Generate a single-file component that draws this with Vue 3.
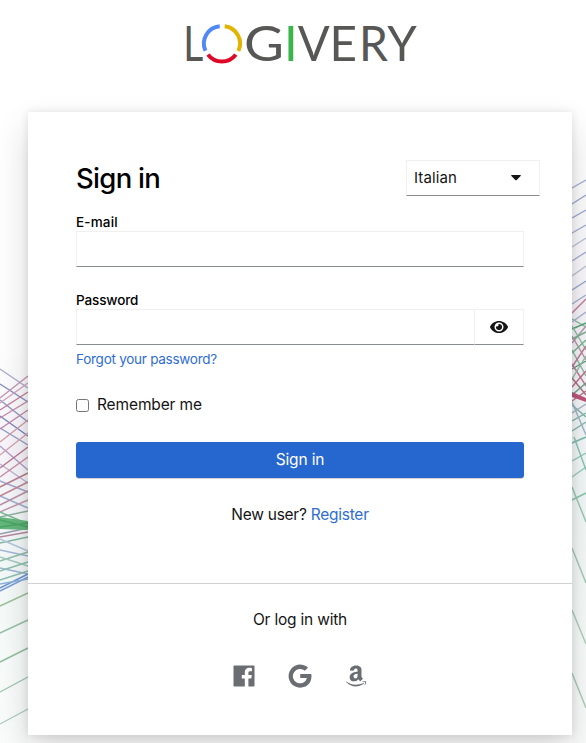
<script setup>
import { reactive, ref } from 'vue'

const form = reactive({
  locale: 'it',
  email: '',
  password: '',
  remember: false,
})

const showPassword = ref(false)

// decorative threads behind the card: x1, y1, x2, y2, color
const threads = [
  [0, 369, 28, 388, '#aaaed0'],
  [0, 384, 28, 402, '#858dc0'],
  [0, 400, 28, 422, '#9098c6'],
  [0, 416, 28, 436, '#7885bb'],
  [0, 428, 28, 445, '#8f9bc9'],
  [0, 446, 28, 470, '#b39bcb'],
  [0, 464, 28, 483, '#c0b0d6'],
  [0, 481, 28, 492, '#a5a6cd'],
  [0, 496, 28, 508, '#9fb0cf'],
  [0, 398, 28, 376, '#c697b5'],
  [0, 403, 28, 383, '#d3a6bc'],
  [0, 410, 28, 392, '#c47f9b'],
  [0, 418, 28, 401, '#c88ba5'],
  [0, 429, 28, 410, '#c08aa8'],
  [0, 442, 28, 420, '#cfa0a8'],
  [0, 455, 28, 433, '#d4a5ae'],
  [0, 468, 28, 447, '#b77790'],
  [0, 477, 28, 457, '#c98d9d'],
  [0, 487, 28, 473, '#b98190'],
  [0, 496, 28, 482, '#c08998'],
  [0, 505, 28, 491, '#bd93a7'],
  [0, 512, 28, 500, '#c39baa'],
  [0, 517, 28, 511, '#92b3a7'],
  [0, 512, 28, 524, '#7fb994'],
  [0, 537, 28, 532, '#b989a0'],
  [0, 534, 28, 528, '#9a9fb0'],
  [0, 543, 28, 537, '#84b9a3'],
  [0, 539, 28, 551, '#b5c6dd'],
  [0, 550, 28, 556, '#a4b8d6'],
  [0, 561, 28, 552, '#8fbfa9'],
  [0, 557, 28, 566, '#a6cac0'],
  [0, 568, 28, 574, '#9fb4d6'],
  [0, 571, 28, 562, '#8cc1ad'],
  [0, 580, 28, 571, '#8dbfb0'],
  [0, 588, 28, 574, '#6e94d4'],
  [0, 591, 28, 577, '#7aa0dc'],
  [0, 584, 28, 579, '#8eb2dc'],
  [0, 606, 28, 593, '#9fc29a'],
  [0, 633, 28, 620, '#98c2a6'],
  [0, 662, 28, 648, '#94bfa2'],
  [0, 692, 28, 677, '#9fc6b0'],
  [0, 724, 28, 709, '#b0cdbb'],
  [572, 188, 586, 180, '#a3aed0'],
  [572, 204, 586, 195, '#9aa8cd'],
  [572, 218, 586, 210, '#9ba9d0'],
  [572, 233, 586, 225, '#a3aed0'],
  [572, 247, 586, 238, '#b8c1d9'],
  [572, 261, 586, 252, '#a3aed0'],
  [572, 276, 586, 266, '#b9c2cf'],
  [572, 290, 586, 281, '#97a4cc'],
  [572, 304, 586, 295, '#a5aece'],
  [572, 313, 586, 299, '#c57e99'],
  [572, 319, 586, 327, '#7ebe9a'],
  [572, 322, 586, 312, '#a7b0cf'],
  [572, 329, 586, 323, '#5aa67c'],
  [572, 326, 586, 350, '#86bfa0'],
  [572, 343, 586, 326, '#b997b1'],
  [572, 339, 586, 332, '#78b590'],
  [572, 336, 586, 360, '#b592a4'],
  [572, 353, 586, 340, '#78b590'],
  [572, 350, 586, 376, '#80bc9a'],
  [572, 367, 586, 346, '#be7c96'],
  [572, 369, 586, 361, '#5d9d7d'],
  [572, 364, 586, 386, '#c08098'],
  [572, 379, 586, 356, '#93b9a3'],
  [572, 378, 586, 395, '#a97386'],
  [572, 387, 586, 371, '#bc6e87'],
  [572, 395, 586, 383, '#69a184'],
  [572, 401, 586, 391, '#b97487'],
  [572, 405, 586, 417, '#7fb4a3'],
  [572, 413, 586, 404, '#a1b2c8'],
  [572, 421, 586, 413, '#7bb7a5'],
  [572, 431, 586, 422, '#7db7a8'],
  [572, 443, 586, 437, '#79bcb2'],
  [572, 461, 586, 453, '#92cabb'],
  [572, 477, 586, 467, '#9accbb'],
  [572, 500, 586, 493, '#8bc9ad'],
  [572, 402, 586, 435, '#9bb7c8'],
  [574, 437, 586, 470, '#8bc4b2'],
  [572, 487, 586, 522, '#98c7b2'],
  [572, 548, 586, 583, '#a4c8b5'],
  [572, 610, 586, 644, '#accdbb'],
  [572, 673, 586, 708, '#a8cbb6'],
]
</script>

<template>
  <div class="page">
    <svg class="backdrop" viewBox="0 0 586 743" aria-hidden="true">
      <defs>
        <linearGradient id="tint" x1="0" y1="0" x2="0" y2="1">
          <stop offset="0" stop-color="#f8f7fc" stop-opacity="0" />
          <stop offset="0.25" stop-color="#f8f5fb" />
          <stop offset="0.55" stop-color="#f4faf9" />
          <stop offset="1" stop-color="#fbfdfc" />
        </linearGradient>
      </defs>
      <rect x="0" y="350" width="28" height="393" fill="url(#tint)" />
      <rect x="572" y="170" width="14" height="573" fill="url(#tint)" />
      <g class="threads">
        <line
          v-for="(t, i) in threads"
          :key="i"
          :x1="t[0]"
          :y1="t[1]"
          :x2="t[2]"
          :y2="t[3]"
          :stroke="t[4]"
        />
        <path d="M0 517L28 521V530L0 529Z" fill="#65b77d" />
        <path d="M0 520L28 527M0 527L28 523" stroke="#48a765" />
        <path d="M572 392L586 398V402L572 397Z" fill="#bd567b" />
      </g>
    </svg>

    <header class="brand">
      <svg class="logo" viewBox="0 -12 240 76" role="img" aria-label="Logivery">
        <g class="letters">
          <text x="3.2" y="44.3" textLength="20" lengthAdjust="spacingAndGlyphs">L</text>
          <text x="64" y="44.3" textLength="40" lengthAdjust="spacingAndGlyphs">G</text>
          <text x="117.7" y="44.3" textLength="32" lengthAdjust="spacingAndGlyphs">V</text>
          <text x="149.5" y="44.3" textLength="27.5" lengthAdjust="spacingAndGlyphs">E</text>
          <text x="179" y="44.3" textLength="29" lengthAdjust="spacingAndGlyphs">R</text>
          <text x="207.3" y="44.3" textLength="29.5" lengthAdjust="spacingAndGlyphs">Y</text>
          <text x="104.1" y="44.3" class="green">I</text>
        </g>
        <g fill="none" stroke-width="4">
          <path d="M25.4 33.7A17.4 17.4 0 0 1 39.7 9.3" stroke="#5089f5" />
          <path d="M44.7 9.3A17.4 17.4 0 0 1 58.4 34" stroke="#e0b400" />
          <path d="M28 37.6A17.4 17.4 0 0 0 55.8 37.6" stroke="#e00727" />
        </g>
      </svg>
    </header>

    <main class="card">
      <div class="card-body">
        <div class="title-row">
          <h1>Sign in</h1>
          <button class="locale" type="button">
            <span>Italian</span>
            <svg width="10" height="6" viewBox="0 0 10 6"><path d="M.7 0H9.3Q10.3.3 9.6 1.1L5.7 4.9Q5 5.5 4.3 4.9L.4 1.1Q-.3.3.7 0Z" fill="#151515" /></svg>
          </button>
        </div>

        <form @submit.prevent>
          <label class="label email-label" for="email">E-mail</label>
          <input id="email" v-model="form.email" class="control" type="text" />

          <label class="label password-label" for="password">Password</label>
          <div class="password">
            <input id="password" v-model="form.password" class="control" :type="showPassword ? 'text' : 'password'" />
            <button class="reveal" type="button" aria-label="Show password" @click="showPassword = !showPassword">
              <svg width="18" height="16" viewBox="0 0 576 512" fill="#151515">
                <path d="M572.52 241.4C518.29 135.59 410.93 64 288 64S57.68 135.64 3.48 241.41a32.35 32.35 0 0 0 0 29.19C57.71 376.41 165.07 448 288 448s230.32-71.64 284.52-177.41a32.35 32.35 0 0 0 0-29.19zM288 400a144 144 0 1 1 144-144 143.93 143.93 0 0 1-144 144zm0-240a95.31 95.31 0 0 0-25.31 3.79 47.85 47.85 0 0 1-66.9 66.9A95.78 95.78 0 1 0 288 160z" />
              </svg>
            </button>
          </div>
          <a class="forgot" href="#">Forgot your password?</a>

          <label class="remember">
            <input v-model="form.remember" type="checkbox" />
            <span>Remember me</span>
          </label>

          <button class="submit" type="submit">Sign in</button>
        </form>

        <p class="register">New user? <a href="#">Register</a></p>
      </div>

      <footer class="social">
        <h2>Or log in with</h2>
        <div class="providers">
          <a href="#" aria-label="Facebook">
            <svg width="24" height="24" viewBox="0 0 24 24"><path d="M2.3 1.5H21.7Q22.5 1.5 22.5 2.3V21.7Q22.5 22.5 21.7 22.5H16.4V14.5H19.3L19.8 10.9H16.4V8.8C16.4 7.7 16.8 7.2 18.1 7.2H19.9V4C19.5 3.9 18.5 3.8 17.3 3.8 14.6 3.8 12.8 5.4 12.8 8.3V10.9H9.8V14.5H12.8V22.5H2.3Q1.5 22.5 1.5 21.7V2.3Q1.5 1.5 2.3 1.5Z" /></svg>
          </a>
          <a href="#" aria-label="Google">
            <svg width="24" height="24" viewBox="0 0 24 24"><path d="M12.2 10H23.3C24.5 17.5 20 23.7 12.2 23.7A11.6 11.6 0 1 1 20.1 3.6L16.9 6.8A7.2 7.2 0 1 0 19 14.1H12.2Z" /></svg>
          </a>
          <a href="#" aria-label="Amazon">
            <svg width="24" height="24" viewBox="0 0 448 512"><path d="M257.2 162.7c-48.7 1.8-169.5 15.5-169.5 117.5 0 109.500 138.300 114 183.500 43.200 6.500 10.200 35.400 37.500 45.300 46.800l56.800-56S341 288.900 341 261.400V114.300C341 89 316.500 32 228.700 32 140.700 32 94 87 94 136.300l73.500 6.800c16.300-49.500 54.200-49.500 54.200-49.500 40.700-.1 35.500 29.800 35.500 69.100zm0 86.800c0 80-84.200 68-84.200 17.200 0-47.200 50.500-56.700 84.200-57.800v40.600zm136 163.500c-7.700 10-70 67-174.500 67S34.200 408.500 9.700 379c-6.800-7.700 1-11.300 5.500-8.300C88.500 415.200 203 488.500 387.700 401c7.500-3.700 13.300 2 5.500 12zm39.800 2.200c-6.500 15.800-16 26.800-21.200 31-5.500 4.500-9.500 2.700-6.500-3.800s19.300-46.500 12.700-55c-6.500-8.300-37-4.300-48-3.200-10.800 1-13 2-14-.3-2.300-5.700 21.700-15.500 37.500-17.500 15.700-1.800 41-.8 46 5.700 3.700 5.100 0 27.100-6.500 43.100z" /></svg>
          </a>
        </div>
      </footer>
    </main>
  </div>
</template>

<style>
body {
  background: #fff;
  overflow: hidden;
}
</style>

<style scoped>
* {
  box-sizing: border-box;
}

.page {
  position: relative;
  height: 743px;
  overflow: hidden;
  color: #151515;
  font-family: Inter, "Liberation Sans", sans-serif;
  font-size: 15.5px;
  line-height: 24px;
  letter-spacing: -0.13px;
}

.backdrop {
  position: absolute;
  inset: 0;
  width: 586px;
  height: 743px;
}

.threads {
  stroke-width: 1.4;
  filter: blur(0.4px);
}

.brand {
  display: flex;
  justify-content: center;
  height: 112px;
  padding: 5px 0 0 14px;
}

.logo {
  width: 240px;
  height: 76px;
}

.letters {
  font-family: Lato, sans-serif;
  font-size: 49px;
  letter-spacing: 0;
  fill: #575756;
}

.letters .green {
  fill: #3bb54a;
}

.card {
  position: relative;
  width: 544px;
  height: 623px;
  margin-left: 28px;
  background: #fff;
  box-shadow: 0 16px 32px rgba(3, 3, 3, 0.16), 0 0 8px rgba(3, 3, 3, 0.1);
}

.card-body {
  height: 471px;
  padding: 48px 48px 0;
}

.title-row {
  display: flex;
  justify-content: space-between;
  margin-right: -16px;
}

h1 {
  margin: 0;
  color: #000;
  font-size: 27.5px;
  font-weight: 450;
  line-height: 36px;
  letter-spacing: -0.7px;
}

button {
  font: inherit;
  letter-spacing: inherit;
}

.locale {
  display: flex;
  align-items: center;
  justify-content: space-between;
  width: 134px;
  height: 36px;
  padding: 0 18px 0 7px;
  border: 1px solid #f0f0f0;
  border-bottom-color: #8a8d90;
  background: #fff;
  color: #151515;
  font-size: 15px;
  letter-spacing: 0.1px;
}

.label {
  display: block;
  height: 18px;
  color: #000;
  font-size: 13.5px;
  font-weight: 550;
  line-height: 18px;
}

.email-label {
  margin-top: 17px;
  letter-spacing: 0.15px;
}

.password-label {
  margin-top: 24px;
  letter-spacing: -0.13px;
}

.control {
  display: block;
  width: 100%;
  height: 36px;
  padding: 5px 8px;
  border: 1px solid #f0f0f0;
  border-bottom-color: #8a8d90;
  border-radius: 0;
  background: #fff;
  font: inherit;
  outline: none;
}

.password {
  display: flex;
}

.reveal {
  display: flex;
  flex: 0 0 49px;
  align-items: center;
  justify-content: center;
  height: 36px;
  padding: 0;
  border: 1px solid #f0f0f0;
  border-left: 0;
  border-bottom-color: #8a8d90;
  background: #fff;
}

a {
  color: #2f6dd2;
  text-decoration: none;
}

.forgot {
  display: block;
  margin-top: 4px;
  font-size: 13.5px;
  line-height: 20px;
  letter-spacing: -0.26px;
}

.remember {
  display: flex;
  align-items: center;
  gap: 8px;
  height: 24px;
  margin-top: 24px;
}

.remember input {
  width: 13px;
  height: 13px;
  margin: 0;
}

.submit {
  display: block;
  width: 100%;
  height: 36px;
  margin-top: 25px;
  padding: 0;
  border: 0;
  border-radius: 3px;
  background: #2666cf;
  box-shadow: 0 1px 0 #d2d2d2;
  color: #fff;
}

.register {
  margin: 25px 0 0;
  text-align: center;
  letter-spacing: -0.25px;
}

.social {
  height: 152px;
  padding-top: 24px;
  border-top: 1px solid #d2d2d2;
}

h2 {
  margin: 0;
  font-size: 15.5px;
  font-weight: 400;
  line-height: 24px;
  letter-spacing: -0.2px;
  text-align: center;
}

.providers {
  display: flex;
  justify-content: center;
  gap: 32px;
  margin-top: 32px;
}

.providers a {
  display: flex;
}

.providers svg {
  fill: #6a6e73;
}
</style>
